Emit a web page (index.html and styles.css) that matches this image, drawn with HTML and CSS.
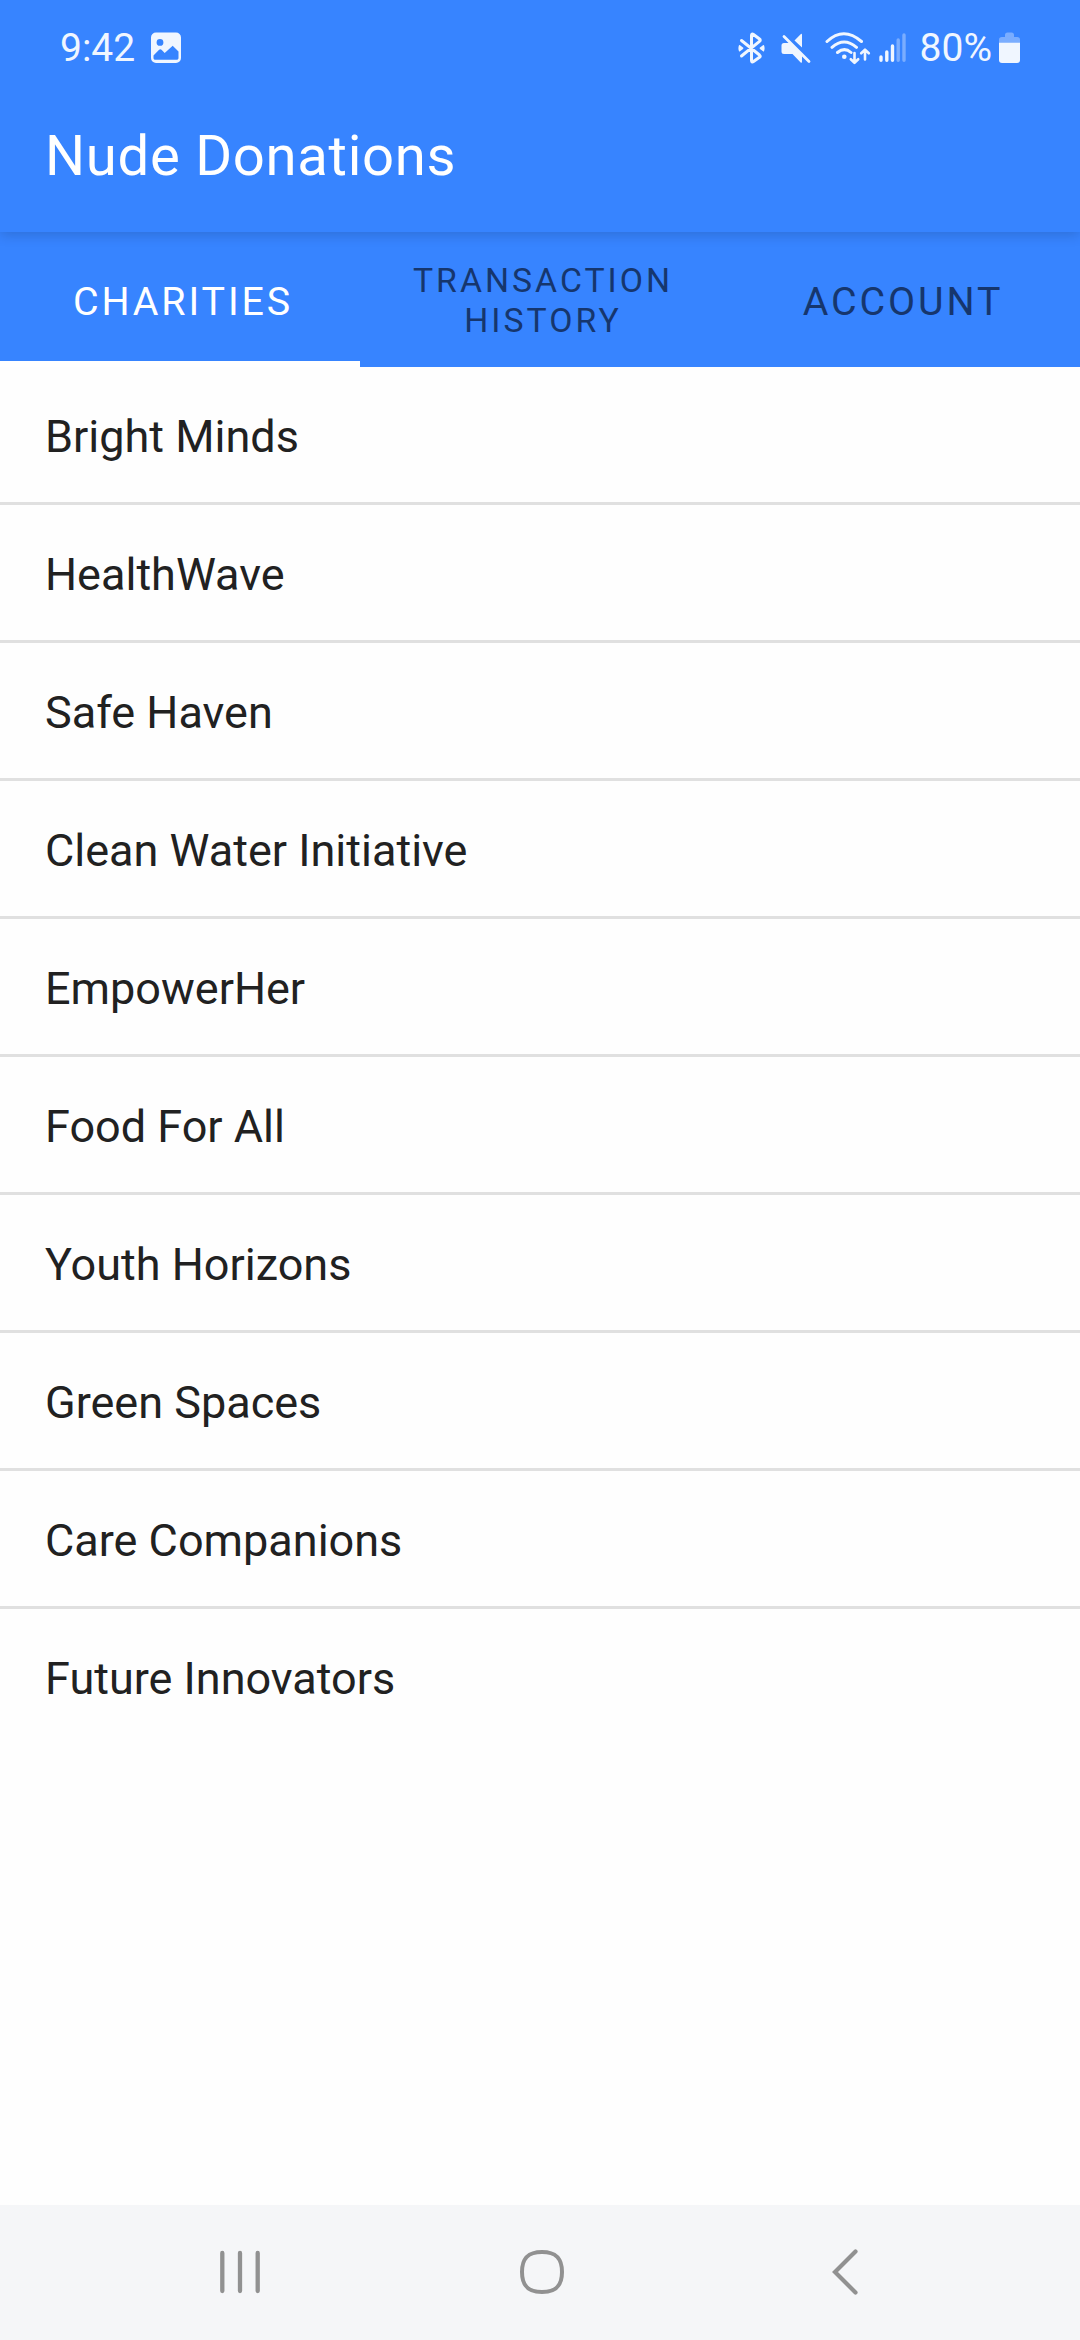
FILE: index.html
```html
<!DOCTYPE html>
<html lang="en">
<head>
<meta charset="utf-8">
<title>Nude Donations</title>
<link rel="stylesheet" href="styles.css">
</head>
<body>
<div class="screen">
  <header class="top">
    <div class="status">
      <span class="time">9:42</span>
      <svg class="photo" width="32" height="32" viewBox="0 0 32 32">
        <path fill="currentColor" fill-rule="evenodd" d="M6 .5h20a5 5 0 0 1 5 5v20.500a5 5 0 0 1-5 5H6a5 5 0 0 1-5-5V5.500a5 5 0 0 1 5-5zM10 7a3.400 3.400 0 1 0 0 6.800A3.400 3.400 0 0 0 10 7zM3.500 23.500v2.500c0 1 .8 1.800 1.800 1.800h21.400c1 0 1.800-.8 1.800-1.800v-6.500L22.700 13.700l-8 7.300-3.200-3.300a1.800 1.800 0 0 0-2.400 0z"/>
      </svg>
      <div class="indicators">
        <svg class="bluetooth" width="30" height="34" viewBox="0 0 30 34">
          <path fill="none" stroke="currentColor" stroke-width="3" stroke-linecap="round" stroke-linejoin="round" d="M4.500 9.500 22.500 24c1 .9 1 1.500 0 2.300L16.500 30.500c-1.200.8-2 .4-2-1V4.500c0-1.400.8-1.800 2-1L22.500 8c1 .8 1 1.500 0 2.300L4.500 25"/>
          <path fill="currentColor" d="M2 14.200q.3-.6 1 0L6 16.500q.8.700 0 1.400L3 20.200q-.7.500-1 0-1.200-3 0-6zM27 14.200q-.3-.6-1 0L23 16.500q-.8.700 0 1.400l3 2.300q.7.500 1 0 1.200-3 0-6z"/>
        </svg>
        <svg class="muted" width="32" height="34" viewBox="0 0 32 34">
          <path fill="currentColor" d="M4 12h5.500L22 23.500V30.500q0 2-1.600.7L12.500 23H4q-2.500 0-2.500-2.500v-6Q1.500 12 4 12zM14.500 9.500 20.400 3.400Q22 2.100 22 4v12.500z"/>
          <path stroke="currentColor" stroke-width="2.800" stroke-linecap="round" d="M4 5.500 29 30.500"/>
        </svg>
        <svg class="wifi" width="48" height="36" viewBox="0 0 48 36">
          <g fill="none" stroke="currentColor" stroke-width="3" stroke-linecap="round" stroke-linejoin="round">
            <path d="M3 10.500q16.500-15.500 34.500 0M8 16.300q12-10.600 24.500 0M13.500 21.500q7-5.800 13.500 0"/>
            <path stroke-width="2.600" d="M30.500 22v9.500M26.800 28.200l3.700 3.600 3.700-3.600M41 28.500V19M37.200 22.300l3.800-3.700 3.800 3.700"/>
          </g>
          <circle cx="20.300" cy="25.700" r="2.300" fill="currentColor"/>
        </svg>
        <svg class="signal" width="28" height="32" viewBox="0 0 28 32">
          <g stroke="currentColor" stroke-width="3.400" stroke-linecap="round">
            <path d="M3 25v3.300M8.800 20v8.300M14.500 14v14.300"/>
            <path opacity=".36" d="M20.200 8v20.300M26 3v25.300"/>
          </g>
        </svg>
        <span class="percent">80%</span>
        <svg class="battery" width="22" height="32" viewBox="0 0 22 32">
          <path fill="currentColor" opacity=".36" d="M0 11V7.800Q0 5 3 5h3V3q0-2.500 2.500-2.500h4Q15 .5 15 3v2h3q3 0 3 2.800V11z"/>
          <path fill="currentColor" d="M0 10.800h21V28q0 3-3 3H3q-3 0-3-3z"/>
        </svg>
      </div>
    </div>
    <h1 class="title">Nude Donations</h1>
  </header>
  <nav class="tabs">
    <div class="tab active">CHARITIES</div>
    <div class="tab small">TRANSACTION HISTORY</div>
    <div class="tab">ACCOUNT</div>
  </nav>
  <ul class="list">
    <li>Bright Minds</li>
    <li>HealthWave</li>
    <li>Safe Haven</li>
    <li>Clean Water Initiative</li>
    <li>EmpowerHer</li>
    <li>Food For All</li>
    <li>Youth Horizons</li>
    <li>Green Spaces</li>
    <li>Care Companions</li>
    <li>Future Innovators</li>
  </ul>
  <footer class="navbar">
    <svg width="46" height="50" viewBox="0 0 46 50"><path fill="none" stroke="currentColor" stroke-width="4.300" stroke-linecap="round" d="M5.300 6v38M23 6v38M40.700 6v38"/></svg>
    <svg width="46" height="50" viewBox="0 0 46 50"><path fill="none" stroke="currentColor" stroke-width="4" d="M23 5C37 5 43 11 43 25S37 45 23 45 3 39 3 25 9 5 23 5z"/></svg>
    <svg width="46" height="50" viewBox="0 0 46 50"><path fill="none" stroke="currentColor" stroke-width="4.200" stroke-linecap="round" d="M34.500 4.500 14 25l20.500 20.500"/></svg>
  </footer>
</div>
</body>
</html>
```
FILE: styles.css
```css
* { box-sizing: border-box; }
body {
  margin: 0;
  background: #fefefe;
  font-family: Roboto, "Liberation Sans", sans-serif;
  font-weight: 400;
}
.screen {
  display: flex;
  flex-direction: column;
  width: 1080px;
  height: 2340px;
  background: #fefefe;
}
.top {
  position: relative;
  z-index: 1;
  height: 232px;
  background: #3784ff;
  color: #fff;
  box-shadow: 0 3px 12px rgba(0, 0, 0, .16);
}
.status {
  display: flex;
  align-items: flex-start;
  height: 84px;
  padding: 32px 59px 0 60px;
  color: #f0f6ff;
  font-size: 39px;
  line-height: 32px;
}
.photo { margin-left: 15px; }
.indicators {
  display: flex;
  align-items: flex-start;
  margin-left: auto;
}
.bluetooth,
.muted,
.wifi { margin-top: -1px; }
.muted { margin-left: 13px; }
.wifi { margin-left: 11.5px; }
.signal { margin-left: 6px; }
.percent { margin-left: 14px; }
.battery { margin-left: 7px; }
.title {
  margin: 0;
  padding: 39px 45px 0;
  font-size: 56.25px;
  font-weight: 400;
  line-height: 66px;
  letter-spacing: .7px;
}
.tabs {
  display: grid;
  grid-template-columns: repeat(3, 1fr);
  height: 135px;
  background: #3784ff;
}
.tab {
  display: flex;
  align-items: center;
  justify-content: center;
  padding: 5px 31px 0 37px;
  color: #16366d;
  font-size: 39.375px;
  line-height: 46px;
  letter-spacing: 2.9px;
  text-align: center;
}
.tab.small {
  padding-top: 3px;
  font-size: 33.75px;
  line-height: 40px;
  letter-spacing: 3px;
}
.tab.active {
  color: #fff;
  box-shadow: inset 0 -6px #fff;
}
.list {
  flex: 1;
  margin: 0;
  padding: 0;
  list-style: none;
}
.list li {
  height: 138px;
  padding: 2px 45px 0;
  border-bottom: 3px solid #e0e0e0;
  color: #212121;
  font-size: 45px;
  line-height: 135px;
}
.list li:last-child { border-bottom: 0; }
.navbar {
  display: flex;
  align-items: center;
  justify-content: space-between;
  height: 135px;
  padding: 0 213px 1px 217px;
  background: #f5f6f8;
  color: #919191;
}
```
